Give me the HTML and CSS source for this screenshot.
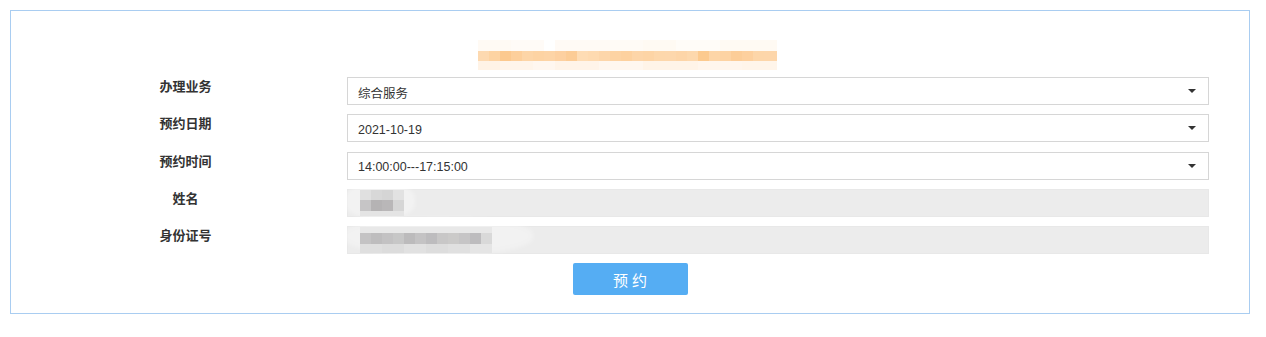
FILE: index.html
```html
<!DOCTYPE html>
<html lang="zh-CN">
<head>
<meta charset="utf-8">
<title>预约</title>
<link rel="stylesheet" href="styles.css">
</head>
<body>
<div class="panel">
  <div class="title">
    <div class="band band-top"></div>
    <div class="band band-main"></div>
    <div class="band band-bottom"></div>
  </div>
  <form class="form">
    <label class="label">办理业务</label>
    <div class="control select"><span class="value">综合服务</span><span class="caret"></span></div>

    <label class="label">预约日期</label>
    <div class="control select"><span class="value">2021-10-19</span><span class="caret"></span></div>

    <label class="label">预约时间</label>
    <div class="control select"><span class="value">14:00:00---17:15:00</span><span class="caret"></span></div>

    <label class="label">姓名</label>
    <div class="control disabled smear-name"><span class="pix pix-name"></span></div>

    <label class="label">身份证号</label>
    <div class="control disabled smear-id"><span class="pix pix-id"></span></div>
  </form>
  <div class="actions">
    <button type="button" class="btn">预约</button>
  </div>
</div>
</body>
</html>
```
FILE: styles.css
```css
html, body {
  margin: 0;
  padding: 0;
  background: #ffffff;
}

body {
  font-family: "Liberation Sans", "Noto Sans CJK SC", sans-serif;
  color: #333333;
}

.panel {
  box-sizing: border-box;
  width: 1240px;
  margin: 10px 0 0 10px;
  border: 1px solid #a9cdf1;
  padding: 29px 0 18px 0;
}

/* blurred (censored) title */
.title {
  width: 299px;
  height: 30px;
  margin-left: 467px;
  display: flex;
  flex-direction: column;
}

.band {
  width: 100%;
}

.band-top {
  height: 11px;
  background: linear-gradient(90deg,
    #fffaf4 0 33px, #fffbf7 33px 66px, #ffffff 66px 77px, #fffaf5 77px 132px,
    #fffbf6 132px 165px, #fffaf3 165px 198px, #fffcf8 198px 242px, #fffaf3 242px 299px);
}

.band-main {
  height: 10px;
  background: linear-gradient(90deg,
    #fdd9b0 0 11px, #fdd3a2 11px 22px, #fcc98f 22px 33px, #fdcf9b 33px 44px,
    #fdd5a7 44px 55px, #fdd3a3 55px 66px, #fdd4a6 66px 77px, #fdd0a0 77px 88px,
    #fccc96 88px 99px, #fedcb4 99px 110px, #fedab0 110px 121px, #fdd6aa 121px 132px,
    #fdd3a3 132px 143px, #fdd19f 143px 154px, #fdd5a8 154px 165px, #fdd4a5 165px 176px,
    #fdd7ab 176px 187px, #fdd7ac 187px 198px, #fdd5a8 198px 209px, #fdd8ad 209px 220px,
    #fcca8f 220px 231px, #fdd5a7 231px 242px, #fdd3a3 242px 253px, #fccd98 253px 264px,
    #fdd09e 264px 275px, #fdd6a9 275px 286px, #fdd6aa 286px 299px);
}

.band-bottom {
  height: 9px;
  background: linear-gradient(90deg,
    #fff3e6 0 22px, #fff5eb 22px 55px, #fff7f0 55px 77px, #fff4e9 77px 121px,
    #fff7ef 121px 165px, #fff4e8 165px 220px, #fff6ed 220px 264px, #fff5ea 264px 299px);
}

/* form grid */
.form {
  display: grid;
  grid-template-columns: 277px 862px;
  column-gap: 23px;
  row-gap: 9.25px;
  margin: 7px 0 0 36px;
}

.label {
  text-align: center;
  font-family: "Noto Sans CJK SC", sans-serif;
  font-size: 13px;
  font-weight: bold;
  line-height: 17px;
  color: #333333;
  align-self: start;
}

.control {
  box-sizing: border-box;
  height: 28px;
  display: flex;
  align-items: center;
  position: relative;
}

.select {
  border: 1px solid #d6d6d6;
  background: #ffffff;
  padding: 0 12px 0 10px;
}

.value {
  font-size: 12.5px;
  color: #333333;
  padding-top: 3px;
  font-family: "Liberation Sans", "Noto Sans CJK SC", sans-serif;
}

.caret {
  margin-left: auto;
  width: 0;
  height: 0;
  border-left: 4px solid transparent;
  border-right: 4px solid transparent;
  border-top: 4px solid #333333;
}

.disabled {
  border: 1px solid #e8e8e8;
  background: #ececec;
  padding-left: 12px;
  align-items: stretch;
}

.pix {
  display: block;
  align-self: stretch;
  position: relative;
  z-index: 1;
}

.pix-name {
  width: 44px;
  background:
    linear-gradient(90deg, #e0e0e0 0 11px, #d8d8d8 11px 22px, #d5d5d5 22px 33px, #e2e2e2 33px 44px) 0 0 / 44px 10px no-repeat,
    linear-gradient(90deg, #c6c5c6 0 11px, #b5b3b4 11px 22px, #b9b7b8 22px 33px, #d6d6d6 33px 44px) 0 10px / 44px 11px no-repeat,
    linear-gradient(90deg, #e4e4e4 0 44px) 0 21px / 44px 5px no-repeat;
}

.pix-id {
  width: 132px;
  background:
    linear-gradient(90deg, #e8e8e8 0 132px) 0 0 / 132px 6px no-repeat,
    linear-gradient(90deg,
      #c4c3c4 0 11px, #bebdbe 11px 22px, #c3c2c3 22px 33px, #c7c7c7 33px 44px,
      #bcbbbc 44px 55px, #c4c3c4 55px 66px, #bdbcbe 66px 77px, #c8c7c7 77px 88px,
      #cbcac9 88px 99px, #c6c5c6 99px 110px, #bdbcbe 110px 121px, #d9d9d9 121px 132px) 0 6px / 132px 11px no-repeat,
    linear-gradient(90deg,
      #dfdfdf 0 22px, #dcdcdc 22px 44px, #e1e1e1 44px 66px, #dddddd 66px 88px,
      #e0e0e0 88px 110px, #e5e5e5 110px 132px) 0 17px / 132px 9px no-repeat;
}

/* white smear left by the blur */
.smear-name::before {
  content: "";
  position: absolute;
  left: -3px;
  top: -6px;
  width: 70px;
  height: 34px;
  border-radius: 40%;
  background: rgba(255, 255, 255, 0.35);
  filter: blur(2px);
}

.smear-id::before {
  content: "";
  position: absolute;
  left: -5px;
  top: -10px;
  width: 190px;
  height: 38px;
  border-radius: 45%;
  background: rgba(255, 255, 255, 0.3);
  filter: blur(2px);
}

/* button */
.actions {
  display: flex;
  justify-content: center;
  margin-top: 9px;
}

.btn {
  width: 115px;
  height: 32px;
  border: none;
  border-radius: 2px;
  background: #55adf3;
  color: #ffffff;
  font-family: "Noto Sans CJK SC", sans-serif;
  font-size: 15px;
  letter-spacing: 4px;
  text-indent: 4px;
  padding: 0;
  cursor: pointer;
}
```
